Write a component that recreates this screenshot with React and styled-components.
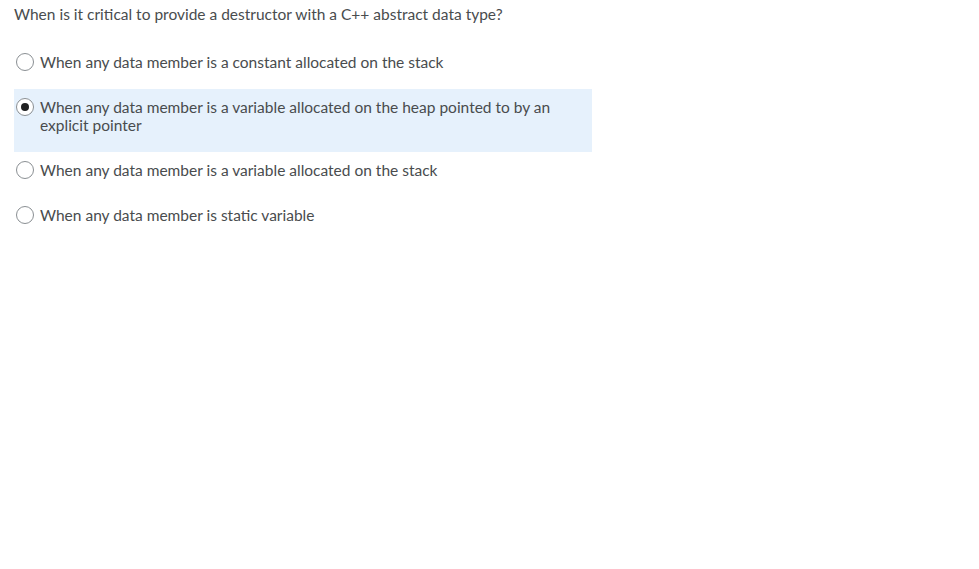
import React from "react";
import { styled, createGlobalStyle } from "styled-components";

const Global = createGlobalStyle`
  html, body {
    margin: 0;
    padding: 0;
    background: #ffffff;
  }
  body {
    font-family: Lato, "Liberation Sans", sans-serif;
    color: #494c4e;
  }
`;

const Page = styled.div`
  padding: 5px 14px 0 14px;
  width: 578px;
`;

const Question = styled.div`
  font-size: 15.5px;
  line-height: 18px;
  margin-bottom: 21px;
`;

const Options = styled.div`
  display: flex;
  flex-direction: column;
`;

const Option = styled.label`
  display: flex;
  align-items: flex-start;
  gap: 6px;
  padding: 9px 0 18px 2px;
  background: ${(p) => (p.$selected ? "#e6f1fc" : "transparent")};
  font-size: 15.5px;
  line-height: 18px;
  cursor: pointer;
`;

const Radio = styled.span`
  flex: none;
  box-sizing: border-box;
  width: 18px;
  height: 18px;
  border-radius: 50%;
  border: 1px solid #8a8f93;
  background: #ffffff;
  display: flex;
  align-items: center;
  justify-content: center;

  &::after {
    content: "";
    width: 8px;
    height: 8px;
    border-radius: 50%;
    background: ${(p) => (p.$checked ? "#202122" : "transparent")};
  }
`;

const Text = styled.span`
  flex: 1;
  padding-right: 30px;
`;

const options = [
  "When any data member is a constant allocated on the stack",
  "When any data member is a variable allocated on the heap pointed to by an explicit pointer",
  "When any data member is a variable allocated on the stack",
  "When any data member is static variable",
];

const App = () => {
  const selected = 1;
  return (
    <>
      <Global />
      <Page>
        <Question>
          When is it critical to provide a destructor with a C++ abstract data type?
        </Question>
        <Options>
          {options.map((item, i) => (
            <Option key={item} $selected={i === selected}>
              <Radio $checked={i === selected} />
              <Text>{item}</Text>
            </Option>
          ))}
        </Options>
      </Page>
    </>
  );
};

export default App;
